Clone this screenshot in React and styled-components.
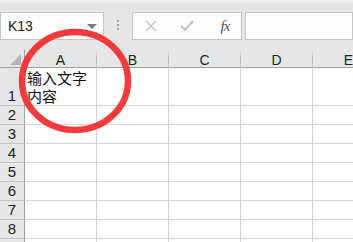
import React from "react";
import styled, { createGlobalStyle } from "styled-components";

const Global = createGlobalStyle`
  html, body { margin: 0; padding: 0; background: #fff; overflow: hidden; }
  body { font-family: "Liberation Sans", "Noto Sans CJK SC", sans-serif; }
`;

const Page = styled.div`
  position: relative;
  width: 353px;
  height: 242px;
  overflow: hidden;
`;

const Toolbar = styled.div`
  height: 50px;
  box-sizing: border-box;
  background: #e6e6e6;
  border-top: 3px solid #ececec;
  padding-top: 9px;
  display: flex;
  align-items: flex-start;
`;

const Box = styled.div`
  height: 28px;
  box-sizing: border-box;
  background: #fdfdfd;
  border: 1px solid #c6c6c6;
  display: flex;
  align-items: center;
  width: ${p => p.$w || "auto"};
  flex: ${p => p.$grow ? 1 : "none"};
  margin-left: ${p => p.$ml || 0}px;
`;

const NameText = styled.span`
  flex: 1;
  padding-left: 7px;
  font-size: 14px;
  color: #222;
`;

const Caret = styled.span`
  width: 0;
  height: 0;
  border-left: 5px solid transparent;
  border-right: 5px solid transparent;
  border-top: 5px solid #7a7a7a;
  margin-right: 6px;
`;

const Dots = styled.div`
  width: 3px;
  margin: 8px 0 0 13px;
  display: flex;
  flex-direction: column;
  gap: 2px;
  span { width: 2px; height: 2px; background: #a8a8a8; }
`;

const IconSlot = styled.div`
  width: 36px;
  display: flex;
  justify-content: center;
  align-items: center;
`;

const Fx = styled.span`
  font-family: "Liberation Serif", serif;
  font-style: italic;
  font-size: 15px;
  color: #555;
  letter-spacing: -1px;
  padding-left: 4px;
`;

const Grid = styled.div`
  display: grid;
  grid-template-columns: 25px repeat(5, 72px);
  grid-template-rows: 18px 38px repeat(8, 19px);
`;

const Corner = styled.div`
  position: relative;
  background: #e6e6e6;
  border-right: 1px solid #9f9f9f;
  border-bottom: 1px solid #9f9f9f;
  box-sizing: border-box;
  &::after {
    content: "";
    position: absolute;
    right: 3px;
    bottom: 2px;
    border-left: 11px solid transparent;
    border-bottom: 11px solid #b5b5b5;
  }
`;

const ColHead = styled.div`
  background: #e6e6e6;
  box-sizing: border-box;
  border-right: 1px solid;
  border-image: linear-gradient(#e6e6e6, #c0c0c0 40%) 1;
  border-image-slice: 0 1 0 0;
  box-shadow: inset 0 -1px 0 #9f9f9f;
  display: flex;
  align-items: flex-end;
  justify-content: center;
  font-size: 14px;
  line-height: 16px;
  color: #222;
`;

const RowHead = styled.div`
  background: #e6e6e6;
  box-sizing: border-box;
  border-right: 1px solid #9f9f9f;
  border-bottom: 1px solid #c6c6c6;
  display: flex;
  align-items: flex-end;
  justify-content: center;
  font-size: 15px;
  line-height: 18px;
  color: #222;
`;

const Cell = styled.div`
  box-sizing: border-box;
  border-right: 1px solid #d4d4d4;
  border-bottom: 1px solid #d4d4d4;
  padding: 1px 0 0 2px;
  font-family: "Noto Sans CJK SC", sans-serif;
  font-size: 15px;
  line-height: 18px;
  color: #111;
`;

const Ring = styled.svg`
  position: absolute;
  left: 0;
  top: 0;
  pointer-events: none;
`;

const cols = ["A", "B", "C", "D", "E"];
const rows = [1, 2, 3, 4, 5, 6, 7, 8, 9];

export default function App() {
  return (
    <Page>
      <Global />
      <Toolbar>
        <Box $w="104px">
          <NameText>K13</NameText>
          <Caret />
        </Box>
        <Dots><span /><span /><span /></Dots>
        <Box $w="110px" $ml={12}>
          <IconSlot>
            <svg width="12" height="12" viewBox="0 0 12 12">
              <path d="M1 1 L11 11 M11 1 L1 11" stroke="#c4c4c4" strokeWidth="1.4" />
            </svg>
          </IconSlot>
          <IconSlot>
            <svg width="14" height="12" viewBox="0 0 14 12">
              <path d="M1 6 L5 10 L13 1" stroke="#c4c4c4" strokeWidth="2.2" fill="none" />
            </svg>
          </IconSlot>
          <IconSlot><Fx>fx</Fx></IconSlot>
        </Box>
        <Box $grow $ml={3} />
      </Toolbar>
      <Grid>
        <Corner />
        {cols.map(c => <ColHead key={c}>{c}</ColHead>)}
        {rows.map(r => (
          <React.Fragment key={r}>
            <RowHead>{r}</RowHead>
            {cols.map(c => (
              <Cell key={c}>
                {r === 1 && c === "A" ? <>输入文字<br />内容</> : null}
              </Cell>
            ))}
          </React.Fragment>
        ))}
      </Grid>
      <Ring width="353" height="242">
        <ellipse cx="75" cy="81" rx="53" ry="49" fill="none" stroke="#f03a3c" strokeWidth="6.5" />
      </Ring>
    </Page>
  );
}
